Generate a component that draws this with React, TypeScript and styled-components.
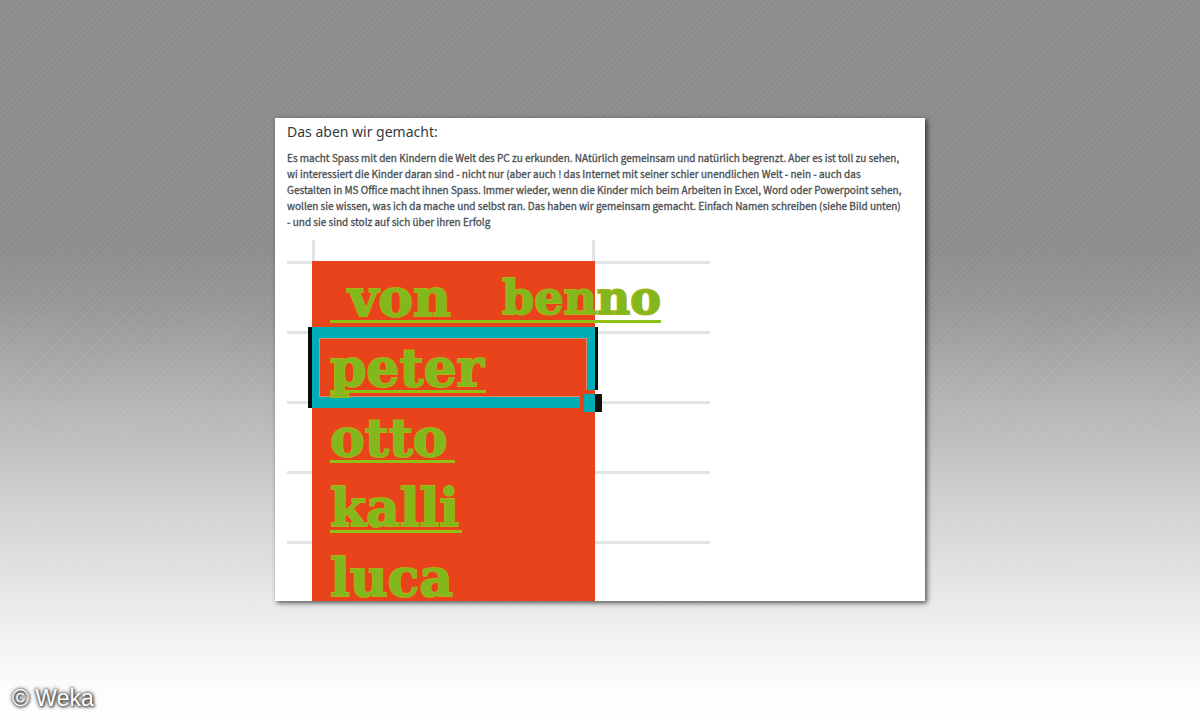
import React from "react";
import styled, { createGlobalStyle } from "styled-components";

const GlobalStyle = createGlobalStyle`
  * { box-sizing: border-box; }
  body { margin: 0; }
`;

const Page = styled.div`
  position: relative;
  min-height: 100vh;
  padding-bottom: 2px;
  display: flex;
  align-items: center;
  justify-content: center;
  background:
    linear-gradient(
      rgba(255, 255, 255, 0) 34%,
      rgba(255, 255, 255, 0.1) 43%,
      rgba(255, 255, 255, 0.37) 57%,
      rgba(255, 255, 255, 0.6) 70%,
      rgba(255, 255, 255, 0.72) 78%,
      rgba(255, 255, 255, 0.89) 89%,
      rgba(255, 255, 255, 0.98) 96%,
      #fff 100%
    ),
    repeating-linear-gradient(135deg, #8b8b8b 0 2px, #919191 2px 4px);
`;

const Card = styled.main`
  width: 100%;
  max-width: 650px;
  padding: 4px 0 0 12px;
  background: #fff;
  box-shadow: 2px 2px 5px rgba(0, 0, 0, 0.65);
  overflow: hidden;
`;

const Title = styled.h1`
  margin: 0;
  font: 400 14px/20px "Noto Sans", sans-serif;
  color: #343a3c;
`;

const Story = styled.p`
  margin: 8px 0 0;
  font: 400 10px/16px "Noto Sans CJK SC", sans-serif;
  color: #4a4f52;
  -webkit-text-stroke: 0.3px #4a4f52;
`;

const Line = styled.span`
  display: block;
  white-space: nowrap;
`;

const Sheet = styled.table`
  margin-top: 10px;
  border-collapse: separate;
  border-spacing: 0;
  table-layout: fixed;
  width: 423px;
`;

const Column = styled.col<{ $width: number }>`
  width: ${(p) => p.$width}px;
`;

const Edge = styled.td`
  padding: 0;
  border-top: 3px solid #e0e6e8;
`;

const HeadCell = styled.td`
  height: 21px;
  padding: 0;
  border-left: 3px solid #e0e6e8;
  border-right: 3px solid #e0e6e8;
`;

const NameCell = styled.td<{ $height: number; $selected?: boolean }>`
  position: ${(p) => (p.$selected ? "relative" : "static")};
  z-index: 1;
  height: ${(p) => p.$height}px;
  padding: 14px 0 0 18px;
  vertical-align: top;
  background: #e8431b;
`;

const Name = styled.span<{ $width: number; $ruled: boolean }>`
  position: relative;
  z-index: 1;
  display: flex;
  justify-content: space-between;
  width: ${(p) => p.$width}px;
  height: ${(p) => (p.$ruled ? 48 : 46)}px;
  border-bottom: ${(p) => (p.$ruled ? "3px solid #8fc015" : "0")};
  color: #82b81e;
  -webkit-text-stroke: 2px #a9b312;
  paint-order: stroke fill;
  white-space: pre;
`;

const Word = styled.span<{ $size: number }>`
  font: 700 ${(p) => p.$size}px/46px "DejaVu Serif", serif;
`;

const Selection = styled.span`
  position: absolute;
  top: -4px;
  left: -4px;
  width: 290px;
  height: 81px;
  border: solid #0a0a0a;
  border-width: 0 3px 0 4px;

  &::before {
    content: "";
    position: absolute;
    inset: 0;
    border: solid #00adb5;
    border-width: 11px 8px 11px 7px;
    box-shadow: inset 0 0 0 1px #e0896c;
  }
`;

const Handle = styled.span`
  position: absolute;
  right: -7px;
  bottom: -4px;
  width: 22px;
  height: 22px;
  padding: 4px 0 0 4px;
  background: linear-gradient(90deg, #e8431b 15px, #fff 15px);

  &::before {
    content: "";
    display: block;
    height: 18px;
    background: linear-gradient(90deg, #00adb5 11px, #111 11px);
  }
`;

const Credit = styled.footer`
  position: absolute;
  left: 12px;
  bottom: 8px;
  font: 400 23px/28px "Liberation Sans", Arial, sans-serif;
  color: #fff;
  text-shadow: 0 0 3px #333, 1px 1px 3px #444, 0 0 5px #666;
`;

const story = [
  "Es macht Spass mit den Kindern die Welt des PC zu erkunden. NAtürlich gemeinsam und natürlich begrenzt. Aber es ist toll zu sehen,",
  "wi interessiert die Kinder daran sind - nicht nur (aber auch ! das Internet mit seiner schier unendlichen Welt - nein - auch das",
  "Gestalten in MS Office macht ihnen Spass. Immer wieder, wenn die Kinder mich beim Arbeiten in Excel, Word oder Powerpoint sehen,",
  "wollen sie wissen, was ich da mache und selbst ran. Das haben wir gemeinsam gemacht. Einfach Namen schreiben (siehe Bild unten)",
  "- und sie sind stolz auf sich über ihren Erfolg",
];

const rows = [
  { words: [" von", "benno"], width: 331, height: 70 },
  { words: ["peter"], width: 156, height: 70, selected: true },
  { words: ["otto"], width: 125, height: 70 },
  { words: ["kalli"], width: 132, height: 70 },
  { words: ["luca"], width: 118, height: 60, last: true },
];

export default function App() {
  return (
    <Page>
      <GlobalStyle />
      <Card>
        <Title>Das aben wir gemacht:</Title>
        <Story>
          {story.map((line) => (
            <Line key={line}>{line} </Line>
          ))}
        </Story>
        <Sheet>
          <colgroup>
            <Column $width={25} />
            <Column $width={283} />
            <Column $width={115} />
          </colgroup>
          <tbody>
            <tr>
              <td />
              <HeadCell />
              <td />
            </tr>
            {rows.map((row) => (
              <tr key={row.words[0]}>
                <Edge />
                <NameCell $height={row.height} $selected={row.selected}>
                  {row.selected && (
                    <Selection>
                      <Handle />
                    </Selection>
                  )}
                  <Name $width={row.width} $ruled={!row.last}>
                    {row.words.map((word) => (
                      <Word key={word} $size={word === "benno" ? 46 : 52}>
                        {word}
                      </Word>
                    ))}
                  </Name>
                </NameCell>
                <Edge />
              </tr>
            ))}
          </tbody>
        </Sheet>
      </Card>
      <Credit>© Weka</Credit>
    </Page>
  );
}
